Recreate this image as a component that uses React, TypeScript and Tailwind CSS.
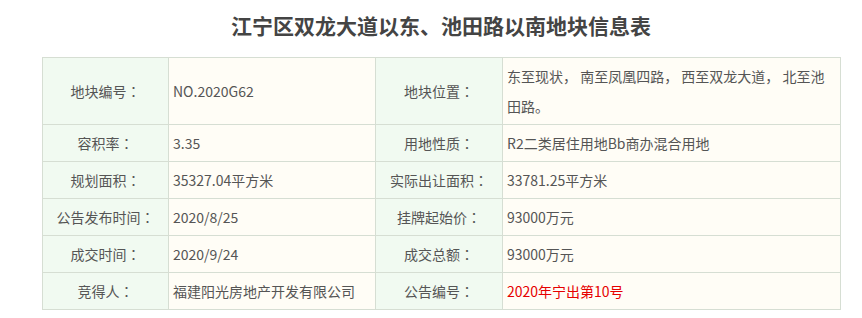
const rows = [
  {
    a: "地块编号",
    b: "NO.2020G62",
    c: "地块位置",
    d: "东至现状， 南至凤凰四路， 西至双龙大道， 北至池田路。",
  },
  { a: "容积率", b: "3.35", c: "用地性质", d: "R2二类居住用地Bb商办混合用地" },
  { a: "规划面积", b: "35327.04平方米", c: "实际出让面积", d: "33781.25平方米" },
  { a: "公告发布时间", b: "2020/8/25", c: "挂牌起始价", d: "93000万元" },
  { a: "成交时间", b: "2020/9/24", c: "成交总额", d: "93000万元" },
  { a: "竞得人", b: "福建阳光房地产开发有限公司", c: "公告编号", d: "2020年宁出第10号", red: true },
];

// centred full-width colon, as in the source page
function Label({ text }: { text: string }) {
  return (
    <>
      {text}
      <span style={{ fontFamily: '"Noto Sans CJK JP", sans-serif' }}>：</span>
    </>
  );
}

export default function App() {
  return (
    <div
      className="h-[318px] w-[862px] bg-white text-[14px] text-[#555]"
      style={{ fontFamily: '"Noto Sans CJK SC", "Noto Sans", sans-serif' }}
    >
      <div className="ml-[42px] w-[798px] pt-[8px]">
        <h1 className="text-center text-[21px] font-bold leading-[34px] text-[#444]">
          江宁区双龙大道以东、池田路以南地块信息表
        </h1>
        <table className="mt-[15px] w-[798px] table-fixed border-collapse">
          <colgroup>
            <col className="w-[126px]" />
            <col className="w-[207px]" />
            <col className="w-[127px]" />
            <col className="w-[338px]" />
          </colgroup>
          <tbody>
            {rows.map((r) => (
              <tr key={r.a}>
                <td className="border border-[#d6ded3] bg-[#f1faf1] py-[3px] text-center align-middle leading-[30px]">
                  <Label text={r.a} />
                </td>
                <td className="border border-[#d6ded3] bg-[#fffdf6] px-[4px] py-[3px] align-middle leading-[30px]">
                  {r.b}
                </td>
                <td className="border border-[#d6ded3] bg-[#f1faf1] py-[3px] text-center align-middle leading-[30px]">
                  <Label text={r.c} />
                </td>
                <td
                  className={`border border-[#d6ded3] bg-[#fffdf6] px-[4px] py-[3px] align-middle leading-[30px] ${
                    r.red ? "text-[#e60000]" : ""
                  }`}
                >
                  {r.d}
                </td>
              </tr>
            ))}
          </tbody>
        </table>
      </div>
    </div>
  );
}
